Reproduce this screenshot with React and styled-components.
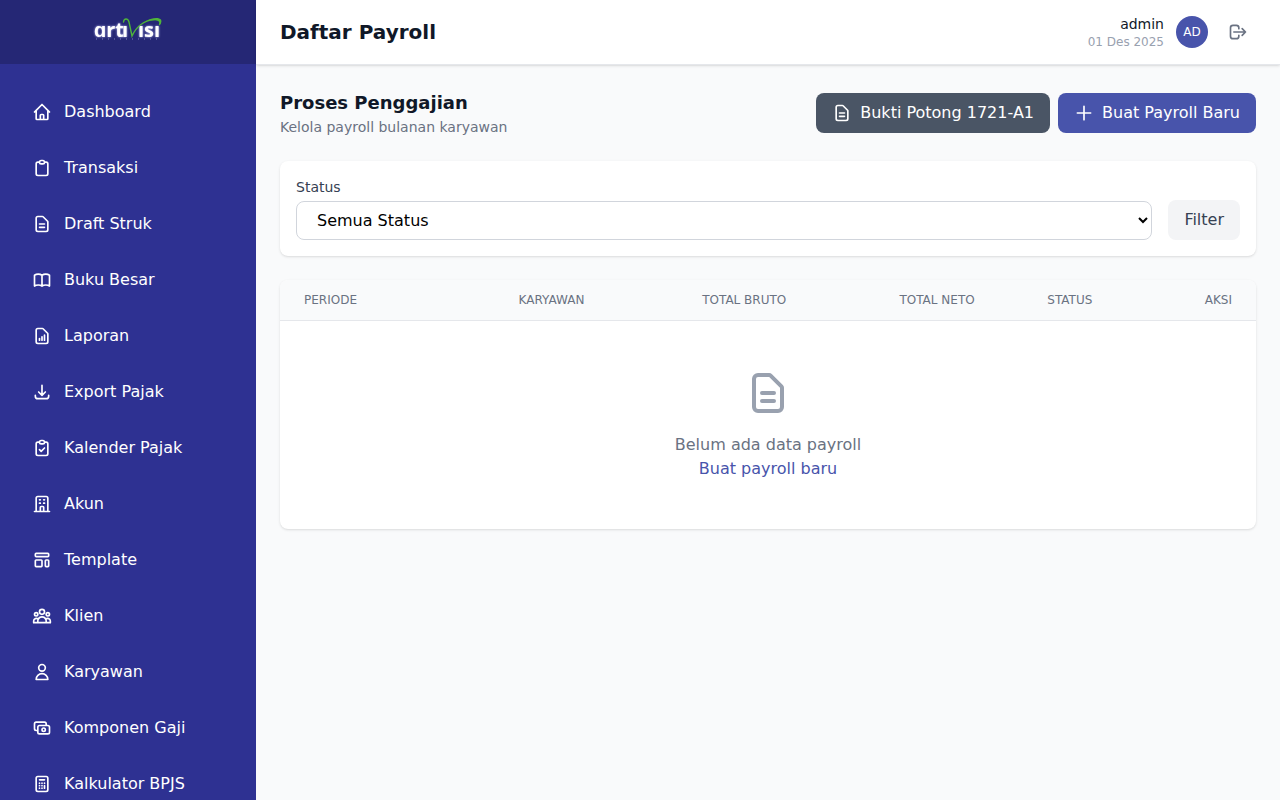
import React from 'react';
import styled, { createGlobalStyle } from 'styled-components';

const GlobalStyle = createGlobalStyle`
  *,
  *::before,
  *::after {
    box-sizing: border-box;
  }

  body {
    margin: 0;
    background-color: #f9fafb;
    color: #101828;
    font-family: 'DejaVu Sans', sans-serif;
    font-size: 16px;
    line-height: 24px;
  }

  h1, h2, p {
    margin: 0;
  }

  button, select {
    font: inherit;
  }
`;

const icons = {
  home: 'M3 12l2-2m0 0l7-7 7 7M5 10v10a1 1 0 001 1h3m10-11l2 2m-2-2v10a1 1 0 01-1 1h-3m-6 0a1 1 0 001-1v-4a1 1 0 011-1h2a1 1 0 011 1v4a1 1 0 001 1m-6 0h6',
  clipboard: 'M9 5H7a2 2 0 00-2 2v12a2 2 0 002 2h10a2 2 0 002-2V7a2 2 0 00-2-2h-2M9 5a2 2 0 002 2h2a2 2 0 002-2M9 5a2 2 0 012-2h2a2 2 0 012 2',
  document: 'M9 12h6m-6 4h6m2 5H7a2 2 0 01-2-2V5a2 2 0 012-2h5.586a1 1 0 01.707.293l5.414 5.414a1 1 0 01.293.707V19a2 2 0 01-2 2z',
  book: 'M12 6.253v13m0-13C10.832 5.477 9.246 5 7.5 5S4.168 5.477 3 6.253v13C4.168 18.477 5.754 18 7.5 18s3.332.477 4.5 1.253m0-13C13.168 5.477 14.754 5 16.5 5c1.747 0 3.332.477 4.5 1.253v13C19.832 18.477 18.247 18 16.5 18c-1.746 0-3.332.477-4.5 1.253',
  report: 'M9 17v-2m3 2v-4m3 4v-6m2 10H7a2 2 0 01-2-2V5a2 2 0 012-2h5.586a1 1 0 01.707.293l5.414 5.414a1 1 0 01.293.707V19a2 2 0 01-2 2z',
  download: 'M4 16v1a3 3 0 003 3h10a3 3 0 003-3v-1m-4-4l-4 4m0 0l-4-4m4 4V4',
  check: 'M9 5H7a2 2 0 00-2 2v12a2 2 0 002 2h10a2 2 0 002-2V7a2 2 0 00-2-2h-2M9 5a2 2 0 002 2h2a2 2 0 002-2M9 5a2 2 0 012-2h2a2 2 0 012 2m-6 9l2 2 4-4',
  building: 'M19 21V5a2 2 0 00-2-2H7a2 2 0 00-2 2v16m14 0h2m-2 0h-5m-9 0H3m2 0h5M9 7h1m-1 4h1m4-4h1m-1 4h1m-5 10v-5a1 1 0 011-1h2a1 1 0 011 1v5m-4 0h4',
  template: 'M4 5a1 1 0 011-1h14a1 1 0 011 1v2a1 1 0 01-1 1H5a1 1 0 01-1-1V5zM4 13a1 1 0 011-1h6a1 1 0 011 1v6a1 1 0 01-1 1H5a1 1 0 01-1-1v-6zM16 13a1 1 0 011-1h2a1 1 0 011 1v6a1 1 0 01-1 1h-2a1 1 0 01-1-1v-6z',
  users: 'M17 20h5v-2a3 3 0 00-5.356-1.857M17 20H7m10 0v-2c0-.656-.126-1.283-.356-1.857M7 20H2v-2a3 3 0 015.356-1.857M7 20v-2c0-.656.126-1.283.356-1.857m0 0a5.002 5.002 0 019.288 0M15 7a3 3 0 11-6 0 3 3 0 016 0zm6 3a2 2 0 11-4 0 2 2 0 014 0zM7 10a2 2 0 11-4 0 2 2 0 014 0z',
  user: 'M16 7a4 4 0 11-8 0 4 4 0 018 0zM12 14a7 7 0 00-7 7h14a7 7 0 00-7-7z',
  cash: 'M17 9V7a2 2 0 00-2-2H5a2 2 0 00-2 2v6a2 2 0 002 2h2m2 4h10a2 2 0 002-2v-6a2 2 0 00-2-2H9a2 2 0 00-2 2v6a2 2 0 002 2zm7-5a2 2 0 11-4 0 2 2 0 014 0z',
  calculator: 'M9 7h6m0 10v-3m-3 3h.01M9 17h.01M9 14h.01M12 14h.01M15 11h.01M12 11h.01M9 11h.01M7 21h10a2 2 0 002-2V5a2 2 0 00-2-2H7a2 2 0 00-2 2v14a2 2 0 002 2z',
  plus: 'M12 4v16m8-8H4',
  logout: 'M17 16l4-4m0 0l-4-4m4 4H7m6 4v1a3 3 0 01-3 3H6a3 3 0 01-3-3V7a3 3 0 013-3h4a3 3 0 013 3v1'
};

const StyledIcon = styled.svg`
  display: block;
  flex: none;
  width: ${({ $size }) => $size}px;
  height: ${({ $size }) => $size}px;
  fill: none;
  stroke: currentColor;
  stroke-width: 2;
  stroke-linecap: round;
  stroke-linejoin: round;
`;

const Icon = ({ name, size = 20 }) => (
  <StyledIcon $size={size} viewBox="0 0 24 24" aria-hidden="true">
    <path d={icons[name]} />
  </StyledIcon>
);

const Layout = styled.div`
  display: flex;
  height: 100vh;
  overflow: hidden;
`;
const Sidebar = styled.aside`
  display: flex;
  flex-direction: column;
  flex: none;
  width: 256px;
  background-color: #2e3192;
  color: #fff;
`;
const Brand = styled.div`
  display: flex;
  align-items: center;
  justify-content: center;
  flex: none;
  height: 64px;
  background-color: #252775;
`;
const LogoSvg = styled.svg`
  display: block;
  width: 80px;
  height: 32px;
  overflow: visible;

  text {
    font-family: 'Open Sans', sans-serif;
    font-size: 20px;
    font-weight: bold;
    fill: #fff;
    filter: drop-shadow(0 0 1px #b9bbf0);
  }
`;
const Nav = styled.nav`
  display: flex;
  flex-direction: column;
  flex: 1;
  gap: 8px;
  min-height: 0;
  padding: 24px 16px;
  overflow: hidden;
`;
const NavLink = styled.a`
  display: flex;
  align-items: center;
  flex: none;
  gap: 12px;
  padding: 12px 16px;
  border-radius: 8px;
  color: inherit;
  text-decoration: none;

  &:hover {
    background-color: #252775;
  }
`;

const Main = styled.div`
  display: flex;
  flex-direction: column;
  flex: 1;
  min-width: 0;
`;
const Header = styled.header`
  display: flex;
  align-items: center;
  justify-content: space-between;
  flex: none;
  height: 65px;
  padding: 0 24px;
  border-bottom: 1px solid #e5e7eb;
  background-color: #fff;
  box-shadow: 0 1px 3px rgba(0, 0, 0, 0.1), 0 1px 2px -1px rgba(0, 0, 0, 0.1);
`;
const PageTitle = styled.h1`
  font-size: 20px;
  line-height: 28px;
`;
const Account = styled.div`
  display: flex;
  align-items: center;
  gap: 12px;
`;
const AccountInfo = styled.div`
  text-align: right;
`;
const UserName = styled.p`
  font-size: 14px;
  line-height: 20px;
`;
const Today = styled.p`
  color: #99a1af;
  font-size: 12px;
  line-height: 16px;
`;
const Avatar = styled.div`
  display: flex;
  align-items: center;
  justify-content: center;
  width: 32px;
  height: 32px;
  border-radius: 50%;
  background-color: #4854ab;
  color: #fff;
  font-size: 12px;
  line-height: 16px;
`;
const LogoutButton = styled.button`
  padding: 8px;
  border: 0;
  border-radius: 8px;
  background: none;
  color: #6a7282;
  cursor: pointer;
`;

const Content = styled.main`
  display: flex;
  flex-direction: column;
  flex: 1;
  gap: 24px;
  padding: 24px;
  overflow: auto;
`;
const SectionHead = styled.div`
  display: flex;
  align-items: center;
  justify-content: space-between;
`;
const SectionTitle = styled.h2`
  font-size: 18px;
  line-height: 28px;
`;
const SectionText = styled.p`
  color: #6a7282;
  font-size: 14px;
  line-height: 20px;
`;
const Actions = styled.div`
  display: flex;
  gap: 8px;
`;
const ActionLink = styled.a`
  display: flex;
  align-items: center;
  gap: 8px;
  padding: 8px 16px;
  border-radius: 8px;
  background-color: ${({ $primary }) => ($primary ? '#4854ab' : '#4a5565')};
  color: #fff;
  text-decoration: none;
`;
const Card = styled.section`
  border-radius: 8px;
  background-color: #fff;
  box-shadow: 0 1px 3px rgba(0, 0, 0, 0.1), 0 1px 2px -1px rgba(0, 0, 0, 0.1);
  overflow: hidden;
`;
const FilterForm = styled.form`
  display: flex;
  align-items: flex-end;
  gap: 16px;
  padding: 16px;
`;
const Field = styled.div`
  flex: 1;
`;
const Label = styled.label`
  display: block;
  margin-bottom: 4px;
  color: #364153;
  font-size: 14px;
  line-height: 20px;
`;
const Select = styled.select`
  display: block;
  width: 100%;
  height: 39px;
  padding: 8px 16px;
  border: 1px solid #d1d5dc;
  border-radius: 8px;
  background-color: #fff;
  color: #000;
`;
const FilterButton = styled.button`
  padding: 8px 16px;
  border: 0;
  border-radius: 8px;
  background-color: #f3f4f6;
  color: #364153;
  cursor: pointer;
`;

const Table = styled.table`
  width: 100%;
  border-collapse: collapse;
`;
const HeadRow = styled.tr`
  border-bottom: 1px solid #e5e7eb;
  background-color: #f9fafb;
`;
const HeadCell = styled.th`
  padding: 12px 24px;
  color: #6a7282;
  font-size: 12px;
  font-weight: normal;
  line-height: 16px;
  text-align: ${({ $align }) => $align || 'left'};
  text-transform: uppercase;
  white-space: nowrap;
`;
const EmptyCell = styled.td`
  padding: 48px 24px;
`;
const Empty = styled.div`
  display: flex;
  flex-direction: column;
  align-items: center;
  color: #6a7282;
`;
const EmptyIcon = styled.div`
  margin-bottom: 16px;
  color: #99a1af;
`;
const TextLink = styled.a`
  color: #4854ab;
  text-decoration: none;
`;

const menu = [
  { icon: 'home', title: 'Dashboard' },
  { icon: 'clipboard', title: 'Transaksi' },
  { icon: 'document', title: 'Draft Struk' },
  { icon: 'book', title: 'Buku Besar' },
  { icon: 'report', title: 'Laporan' },
  { icon: 'download', title: 'Export Pajak' },
  { icon: 'check', title: 'Kalender Pajak' },
  { icon: 'building', title: 'Akun' },
  { icon: 'template', title: 'Template' },
  { icon: 'users', title: 'Klien' },
  { icon: 'user', title: 'Karyawan' },
  { icon: 'cash', title: 'Komponen Gaji' },
  { icon: 'calculator', title: 'Kalkulator BPJS' }
];

const columns = [
  { title: 'Periode' },
  { title: 'Karyawan', align: 'right' },
  { title: 'Total Bruto', align: 'right' },
  { title: 'Total Neto', align: 'right' },
  { title: 'Status', align: 'center' },
  { title: 'Aksi', align: 'right' }
];

const Logo = () => (
  <LogoSvg viewBox="0 0 80 32" role="img" aria-label="artivisi">
    <text x="6" y="21">ɑrt</text>
    <text x="34" y="21">ı</text>
    <text x="50" y="21">ısı</text>
    {/* the green "v" and its swoosh over the last letters */}
    <path
      d="M35.5 6C36 2 40 2 41 6L44 20C48 11 56 4.500 66 3.500C72 3 74 5 71.500 8.500"
      fill="none"
      stroke="#4fb53a"
      strokeWidth="1.400"
      strokeLinecap="round"
    />
    <path d="M58 5C64 1.500 71 1 73 3.500C74 5 73 7.500 71 9C72 6 71 4.500 67 4.200C64 4 61 4.300 58 5Z" fill="#4fb53a" />
    <path d="M8 23H73" stroke="#a5a7d8" strokeWidth="1" strokeDasharray="1 5" opacity="0.7" />
  </LogoSvg>
);

export default class App extends React.Component {
  render() {
    return (
      <Layout>
        <GlobalStyle />
        <Sidebar>
          <Brand>
            <Logo />
          </Brand>
          <Nav>
            {menu.map(item => (
              <NavLink key={item.title} href="#">
                <Icon name={item.icon} />
                {item.title}
              </NavLink>
            ))}
          </Nav>
        </Sidebar>
        <Main>
          <Header>
            <PageTitle>Daftar Payroll</PageTitle>
            <Account>
              <AccountInfo>
                <UserName>admin</UserName>
                <Today>01 Des 2025</Today>
              </AccountInfo>
              <Avatar>AD</Avatar>
              <LogoutButton type="button" aria-label="Logout">
                <Icon name="logout" />
              </LogoutButton>
            </Account>
          </Header>
          <Content>
            <SectionHead>
              <div>
                <SectionTitle>Proses Penggajian</SectionTitle>
                <SectionText>Kelola payroll bulanan karyawan</SectionText>
              </div>
              <Actions>
                <ActionLink href="#">
                  <Icon name="document" />
                  Bukti Potong 1721-A1
                </ActionLink>
                <ActionLink href="#" $primary>
                  <Icon name="plus" />
                  Buat Payroll Baru
                </ActionLink>
              </Actions>
            </SectionHead>
            <Card>
              <FilterForm>
                <Field>
                  <Label htmlFor="status">Status</Label>
                  <Select id="status" name="status">
                    <option value="">Semua Status</option>
                  </Select>
                </Field>
                <FilterButton type="button">Filter</FilterButton>
              </FilterForm>
            </Card>
            <Card>
              <Table>
                <thead>
                  <HeadRow>
                    {columns.map(({ title, align }) => (
                      <HeadCell key={title} $align={align}>
                        {title}
                      </HeadCell>
                    ))}
                  </HeadRow>
                </thead>
                <tbody>
                  <tr>
                    <EmptyCell colSpan={columns.length}>
                      <Empty>
                        <EmptyIcon>
                          <Icon name="document" size={48} />
                        </EmptyIcon>
                        <p>Belum ada data payroll</p>
                        <TextLink href="#">Buat payroll baru</TextLink>
                      </Empty>
                    </EmptyCell>
                  </tr>
                </tbody>
              </Table>
            </Card>
          </Content>
        </Main>
      </Layout>
    );
  }
}
